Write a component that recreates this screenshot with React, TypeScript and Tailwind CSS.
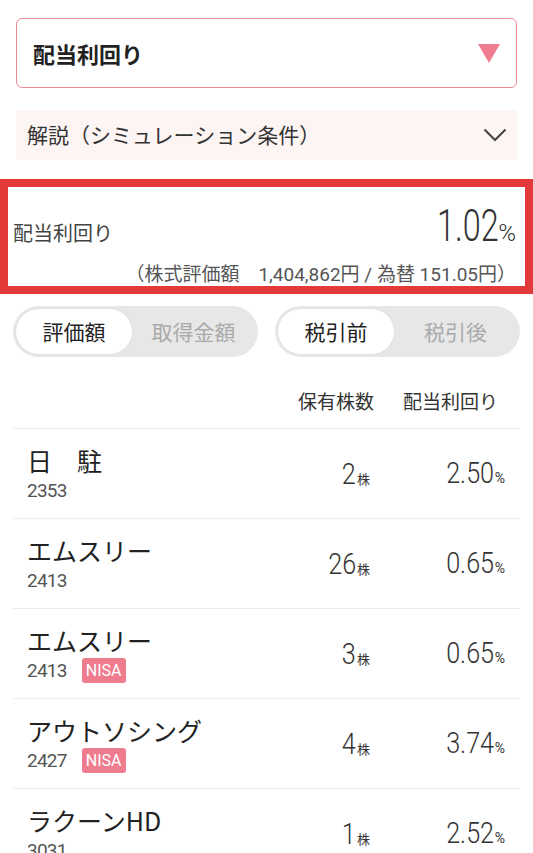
const jp = "font-['Noto_Sans_CJK_JP',sans-serif]";
const num = "font-['Roboto','Noto_Sans_CJK_JP',sans-serif]";

type Holding = {
  name: string;
  code: string;
  shares: string;
  yieldPct: string;
  nisa?: boolean;
};

const holdings: Holding[] = [
  { name: '日　駐', code: '2353', shares: '2', yieldPct: '2.50' },
  { name: 'エムスリー', code: '2413', shares: '26', yieldPct: '0.65' },
  { name: 'エムスリー', code: '2413', shares: '3', yieldPct: '0.65', nisa: true },
  { name: 'アウトソシング', code: '2427', shares: '4', yieldPct: '3.74', nisa: true },
  { name: 'ラクーンHD', code: '3031', shares: '1', yieldPct: '2.52' },
];

function Toggle({ on, off }: { on: string; off: string }) {
  return (
    <div className="flex-1 h-[51px] rounded-full bg-[#e7e7e7] p-[3px] flex items-center">
      <div className="w-[116px] h-full rounded-full bg-white flex items-center justify-center text-[21px] text-[#222] shadow-[0_0_2px_rgba(0,0,0,0.08)]">
        {on}
      </div>
      <div className="flex-1 flex items-center justify-center text-[21px] text-[#aaaaaa]">{off}</div>
    </div>
  );
}

function Row({ h }: { h: Holding }) {
  return (
    <div className="h-[90px] flex items-center border-b border-[#ededed] pr-[15px]">
      <div className="flex-1 pl-[14px] flex flex-col">
        <div className="text-[25px] leading-[28px] text-[#222] whitespace-nowrap">{h.name}</div>
        <div className="mt-[6px] flex items-center h-[22px]">
          <span className={`${num} text-[19px] leading-[22px] tracking-[-0.04em] text-[#555]`}>{h.code}</span>
          {h.nisa && (
            <span className={`${num} ml-[15px] w-[44px] h-[25px] rounded-[3px] bg-[#ee7b8e] text-white text-[16px] flex items-center justify-center`}>
              NISA
            </span>
          )}
        </div>
      </div>
      <div className="w-[100px] flex justify-end items-baseline text-[#333]">
        <span className={`${num} inline-block origin-right scale-x-[0.84] text-[30px] font-light leading-none`}>{h.shares}</span>
        <span className="text-[13px] ml-[1px]">株</span>
      </div>
      <div className="w-[135px] flex justify-end items-baseline text-[#333]">
        <span className={`${num} inline-block origin-right scale-x-[0.84] text-[30px] font-light leading-none`}>{h.yieldPct}</span>
        <span className={`${num} text-[14px] ml-[1px]`}>%</span>
      </div>
    </div>
  );
}

export default function App() {
  return (
    <div className={`${jp} w-[533px] h-[853px] overflow-hidden bg-white`}>
      <div className="px-4 pt-[18px]">
        <div className="h-[70px] rounded-md border-[1.5px] border-[#ee8a98] flex items-center justify-between pl-4 pr-[16px]">
          <span className="text-[22px] font-bold text-[#222]">配当利回り</span>
          <svg width="22" height="19" viewBox="0 0 22 19">
            <polygon points="0,0 22,0 11,19" fill="#f07e90" />
          </svg>
        </div>

        <div className="mt-[22px] h-[50px] bg-[#fdf4f4] flex items-center justify-between pl-[11px] pr-[10px]">
          <span className="text-[21px] text-[#333]">解説（シミュレーション条件）</span>
          <svg width="24" height="14" viewBox="0 0 24 14">
            <polyline points="1.5,1.5 12,12 22.5,1.5" fill="none" stroke="#444" strokeWidth="2" />
          </svg>
        </div>
      </div>

      <div className="mt-[19px] border-8 border-[#e23a39] h-[115px] pl-[5px] pr-[9px] pt-[17px]">
        <div className="flex items-baseline justify-between">
          <span className="text-[20px] text-[#444]">配当利回り</span>
          <span className="flex items-baseline text-[#333]">
            <span className={`${num} inline-block origin-right scale-x-[0.72] text-[45px] font-light leading-[44px]`}>1.02</span>
            <span className={`${num} text-[24px] font-light`}>%</span>
          </span>
        </div>
        <div className={`${num} mt-[11px] text-right text-[19px] leading-[25px] text-[#555] whitespace-nowrap`}>
          （株式評価額　1,404,862円 / 為替 151.05円）
        </div>
      </div>

      <div className="px-[13px]">
        <div className="mt-[12px] flex gap-[17px]">
          <Toggle on="評価額" off="取得金額" />
          <Toggle on="税引前" off="税引後" />
        </div>

        <div className="pt-[30px] pb-[13px] flex items-center border-b border-[#ededed] text-[19px] leading-[28px] text-[#333]">
          <div className="flex-1" />
          <div className="text-right mr-[22px]">保有株数</div>
          <div className="w-[124px] pr-[22px] text-right">配当利回り</div>
        </div>

        {holdings.map((h, i) => (
          <Row key={i} h={h} />
        ))}
      </div>
    </div>
  );
}
